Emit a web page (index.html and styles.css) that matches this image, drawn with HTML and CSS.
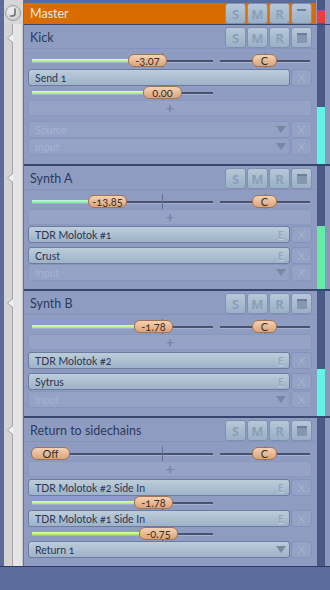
FILE: index.html
```html
<!DOCTYPE html>
<html lang="en">
<head>
    <meta charset="UTF-8">
    <meta name="viewport" content="width=device-width, initial-scale=1.0">
    <title>Mixer - Routing</title>
    <link rel="stylesheet" href="styles.css">
</head>
<body>
    <div class="mixer">
        <!-- Master bus -->
        <div class="row master-row">
            <div class="tree tree-top">
                <span class="route-btn">
                    <svg width="10" height="10" viewBox="0 0 10 10"><path d="M7 1 V5.5 Q7 8 4.5 8 H2.5" fill="none" stroke="#6e6e6e" stroke-width="1.6" stroke-linecap="round"/></svg>
                </span>
            </div>
            <div class="master">
                <span class="name">Master</span>
                <div class="btns">
                    <span class="btn">S</span><span class="btn">M</span><span class="btn">R</span><span class="btn"><i class="dash"></i></span>
                </div>
            </div>
            <div class="gap"></div>
            <div class="meter"><div class="level red" style="height: 13px"></div></div>
            <div class="edge"></div>
        </div>

        <!-- Kick -->
        <div class="row chan first">
            <div class="tree"><span class="notch"></span></div>
            <div class="panel">
                <div class="head">
                    <span class="name">Kick</span>
                    <div class="btns">
                        <span class="btn">S</span><span class="btn">M</span><span class="btn">R</span><span class="btn"><i class="square"></i></span>
                    </div>
                </div>
                <div class="sliders">
                    <div class="slider vol"><i class="tick"></i><div class="fill" style="width: 96px"></div><span class="knob" style="left: 96px">-3.07</span></div>
                    <div class="slider pan"><i class="tick"></i><span class="knob small" style="left: 32px">C</span></div>
                </div>
                <div class="slot">
                    <span class="slot-main"><span class="label">Send 1</span></span>
                    <span class="x">X</span>
                </div>
                <div class="sliders tight">
                    <div class="slider vol"><i class="tick"></i><div class="fill" style="width: 111px"></div><span class="knob" style="left: 111px">0.00</span></div>
                </div>
                <div class="plus">+</div>
                <div class="slot off wide">
                    <span class="slot-main"><span class="label">Source</span><i class="arrow"></i></span>
                    <span class="x">X</span>
                </div>
                <div class="slot off tight">
                    <span class="slot-main"><span class="label">Input</span><i class="arrow"></i></span>
                    <span class="x">X</span>
                </div>
            </div>
            <div class="gap"></div>
            <div class="meter"><div class="level cyan" style="height: 57px"></div></div>
            <div class="edge"></div>
        </div>

        <!-- Synth A -->
        <div class="row chan">
            <div class="tree"><span class="notch"></span></div>
            <div class="panel">
                <div class="head">
                    <span class="name">Synth A</span>
                    <div class="btns">
                        <span class="btn">S</span><span class="btn">M</span><span class="btn">R</span><span class="btn"><i class="square"></i></span>
                    </div>
                </div>
                <div class="sliders">
                    <div class="slider vol"><i class="tick"></i><div class="fill mint" style="width: 56px"></div><span class="knob" style="left: 56px">-13.85</span></div>
                    <div class="slider pan"><i class="tick"></i><span class="knob small" style="left: 32px">C</span></div>
                </div>
                <div class="plus">+</div>
                <div class="slot near">
                    <span class="slot-main"><span class="label">TDR Molotok #1</span><span class="edit">E</span></span>
                    <span class="x">X</span>
                </div>
                <div class="slot spaced">
                    <span class="slot-main"><span class="label">Crust</span><span class="edit">E</span></span>
                    <span class="x">X</span>
                </div>
                <div class="slot off tight">
                    <span class="slot-main"><span class="label">Input</span><i class="arrow"></i></span>
                    <span class="x">X</span>
                </div>
            </div>
            <div class="gap"></div>
            <div class="meter"><div class="level mint" style="height: 63px"></div></div>
            <div class="edge"></div>
        </div>

        <!-- Synth B -->
        <div class="row chan">
            <div class="tree"><span class="notch"></span></div>
            <div class="panel">
                <div class="head">
                    <span class="name">Synth B</span>
                    <div class="btns">
                        <span class="btn">S</span><span class="btn">M</span><span class="btn">R</span><span class="btn"><i class="square"></i></span>
                    </div>
                </div>
                <div class="sliders">
                    <div class="slider vol"><i class="tick"></i><div class="fill" style="width: 102px"></div><span class="knob" style="left: 102px">-1.78</span></div>
                    <div class="slider pan"><i class="tick"></i><span class="knob small" style="left: 32px">C</span></div>
                </div>
                <div class="plus">+</div>
                <div class="slot">
                    <span class="slot-main"><span class="label">TDR Molotok #2</span><span class="edit">E</span></span>
                    <span class="x">X</span>
                </div>
                <div class="slot spaced">
                    <span class="slot-main"><span class="label">Sytrus</span><span class="edit">E</span></span>
                    <span class="x">X</span>
                </div>
                <div class="slot off near">
                    <span class="slot-main"><span class="label">Input</span><i class="arrow"></i></span>
                    <span class="x">X</span>
                </div>
            </div>
            <div class="gap"></div>
            <div class="meter"><div class="level cyan" style="height: 47px"></div></div>
            <div class="edge"></div>
        </div>

        <!-- Return to sidechains -->
        <div class="row chan">
            <div class="tree"><span class="notch"></span></div>
            <div class="panel">
                <div class="head">
                    <span class="name">Return to sidechains</span>
                    <div class="btns">
                        <span class="btn">S</span><span class="btn">M</span><span class="btn">R</span><span class="btn"><i class="square"></i></span>
                    </div>
                </div>
                <div class="sliders">
                    <div class="slider vol"><i class="tick"></i><span class="knob" style="left: -1px">Off</span></div>
                    <div class="slider pan"><i class="tick"></i><span class="knob small" style="left: 32px">C</span></div>
                </div>
                <div class="plus">+</div>
                <div class="slot">
                    <span class="slot-main"><span class="label">TDR Molotok #2 Side In</span><span class="edit">E</span></span>
                    <span class="x">X</span>
                </div>
                <div class="sliders tight">
                    <div class="slider vol"><i class="tick"></i><div class="fill" style="width: 102px"></div><span class="knob" style="left: 102px">-1.78</span></div>
                </div>
                <div class="slot near">
                    <span class="slot-main"><span class="label">TDR Molotok #1 Side In</span><span class="edit">E</span></span>
                    <span class="x">X</span>
                </div>
                <div class="sliders tight">
                    <div class="slider vol"><i class="tick"></i><div class="fill" style="width: 107px"></div><span class="knob" style="left: 107px">-0.75</span></div>
                </div>
                <div class="slot near">
                    <span class="slot-main"><span class="label">Return 1</span><i class="arrow"></i></span>
                    <span class="x">X</span>
                </div>
            </div>
            <div class="gap"></div>
            <div class="meter"></div>
            <div class="edge"></div>
        </div>

        <div class="footer"></div>
    </div>
</body>
</html>
```

FILE: styles.css
```css
* {
    margin: 0;
    padding: 0;
    box-sizing: border-box;
}

body {
    background: #5b6b9b;
    font-family: Lato, 'Noto Sans', sans-serif;
    font-variant-numeric: oldstyle-nums;
    width: 330px;
    height: 590px;
    overflow: hidden;
}

.mixer {
    display: flex;
    flex-direction: column;
    height: 590px;
}

.row {
    display: grid;
    grid-template-columns: 24px 292px 1px 8px 5px;
}

/* left routing strip */
.tree {
    position: relative;
    background: linear-gradient(to right, #5b6b9b 0 4px, #d3d3d3 4px 12px, #a6a6a6 12px 13px, #e4e4e4 13px 22px, #c6c8ce 22px 23px, #66739c 23px 24px);
}

.tree-top {
    background: linear-gradient(to right, #5b6b9b 0 4px, #d6d6d6 4px 23px, #66739c 23px 24px);
}

.route-btn {
    position: absolute;
    left: 5px;
    top: 5px;
    width: 16px;
    height: 16px;
    border-radius: 50%;
    border: 1px solid #9c9c9c;
    background: radial-gradient(circle at 40% 35%, #f0f0f0, #c4c4c4);
    display: flex;
    justify-content: center;
    align-items: center;
}

.notch {
    position: absolute;
    left: 7px;
    top: 9px;
    width: 0;
    height: 0;
    border-top: 5px solid transparent;
    border-bottom: 5px solid transparent;
    border-right: 6px solid #9a9a9a;
}

.notch::after {
    content: '';
    position: absolute;
    left: 1px;
    top: -4px;
    border-top: 4px solid transparent;
    border-bottom: 4px solid transparent;
    border-right: 5px solid #f2f2f2;
}

/* master */
.master {
    background: #d96c00;
    height: 21px;
    margin-top: 3px;
    display: flex;
    align-items: center;
    padding: 0 4px 0 6px;
}

.master .name {
    color: #f3e6dc;
}

.name {
    font-size: 12.5px;
    color: #2c3a5c;
    line-height: 21px;
}

.btns {
    display: flex;
    gap: 1px;
    margin-left: auto;
    align-self: flex-start;
}

.btn {
    width: 21px;
    height: 21px;
    border-radius: 3px;
    border: 1px solid #7f91b0;
    background: linear-gradient(#b6c8d8, #9ab0c6);
    color: #8a9fb8;
    font-family: 'Noto Sans', sans-serif;
    font-size: 13px;
    font-weight: bold;
    display: flex;
    justify-content: center;
    align-items: center;
}

.dash {
    width: 9px;
    height: 2px;
    background: #6d809c;
    margin-bottom: 8px;
}

.square {
    width: 10px;
    height: 10px;
    background: #8597b0;
    border-top: 2px solid #6c7f9a;
}

.gap {
    background: #8d9bc3;
}

.edge {
    background: #8998bd;
}

.meter {
    background: #4b5987;
    display: flex;
    flex-direction: column;
    justify-content: flex-end;
}

.level.red {
    background: #f23c3c;
    border-top: 1px solid #9a4ad0;
    margin-bottom: 1px;
}

.level.cyan {
    background: #62f2e6;
}

.level.mint {
    background: #66eaa4;
}

/* channel panels */
.chan > :not(.tree) {
    border-top: 2px solid #38456f;
}

.chan.first > :not(.tree) {
    border-top-width: 1px;
}

.panel {
    background: #8f9cc2;
    padding: 0 4px 8px;
}

.chan.first .panel {
    padding-bottom: 9px;
}

.head {
    display: flex;
    height: 24px;
    padding: 2px 4px 0 6px;
    margin: 0 -4px;
    border-bottom: 1px solid #8593bb;
}

.sliders {
    display: flex;
    gap: 7px;
    margin: 5px 0 0 4px;
}

.sliders.tight {
    margin-top: 0;
}

.slider {
    position: relative;
    height: 13px;
}

.slider.vol {
    width: 181px;
}

.slider.pan {
    width: 90px;
}

.slider::before {
    content: '';
    position: absolute;
    left: 0;
    right: 0;
    top: 6px;
    height: 2px;
    background: #4a526e;
    box-shadow: 0 1px 0 #a4b0cf;
}

.tick {
    position: absolute;
    left: 130px;
    top: -1px;
    bottom: -1px;
    width: 1px;
    background: #67718f;
}

.pan .tick {
    left: 45px;
}

.fill {
    position: absolute;
    left: 0;
    top: 5px;
    height: 3px;
    background: linear-gradient(#e0ffb4, #a6e86e);
}

.fill.mint {
    background: linear-gradient(#c4ffd8, #78e8a0);
}

.knob {
    position: absolute;
    top: 0;
    width: 39px;
    height: 13px;
    border-radius: 6px;
    border: 1px solid #a27454;
    background: linear-gradient(#f4d2b4, #d9a47c);
    color: #3a3026;
    font-size: 11px;
    line-height: 11px;
    text-align: center;
}

.knob.small {
    width: 25px;
}

/* plugin slots */
.plus {
    height: 16px;
    margin-top: 1px;
    border-radius: 3px;
    background: #96a3c7;
    border: 1px solid #8b98be;
    color: #7886a8;
    font-size: 15px;
    font-weight: bold;
    line-height: 13px;
    text-align: center;
}

.slot {
    display: flex;
    gap: 1px;
    height: 17px;
    margin-top: 2px;
}

.slot.near {
    margin-top: 1px;
}

.slot.tight {
    margin-top: 0;
}

.slot.spaced {
    margin-top: 4px;
}

.slot.wide {
    margin-top: 5px;
}

.slot-main {
    flex: 1;
    display: flex;
    align-items: center;
    padding: 0 5px 0 6px;
    border-radius: 3px;
    border: 1px solid #6d7c9e;
    background: linear-gradient(#bccdda, #9eb3c9);
    color: #2b3552;
    font-size: 10.5px;
}

.label {
    flex: 1;
}

.edit {
    color: #97a9bd;
    font-family: 'Noto Sans', sans-serif;
    font-weight: bold;
    font-size: 11px;
    text-shadow: 0 1px 0 #c4d2de;
}

.arrow {
    width: 0;
    height: 0;
    border-left: 5px solid transparent;
    border-right: 5px solid transparent;
    border-top: 7px solid #7888a2;
    margin-right: -2px;
}

.x {
    width: 21px;
    border-radius: 3px;
    border: 1px solid #8593ba;
    background: #94a2c6;
    color: #a6b0ca;
    font-size: 12px;
    display: flex;
    justify-content: center;
    align-items: center;
}

.slot.off .slot-main {
    background: #94a2c6;
    border-color: #8996bc;
    color: #a7b3cf;
}

.slot.off .x {
    border-color: #8a97bd;
}

.footer {
    flex: 1;
    border-top: 1px solid #2f3b63;
    background: #5b6b9b;
}
```
